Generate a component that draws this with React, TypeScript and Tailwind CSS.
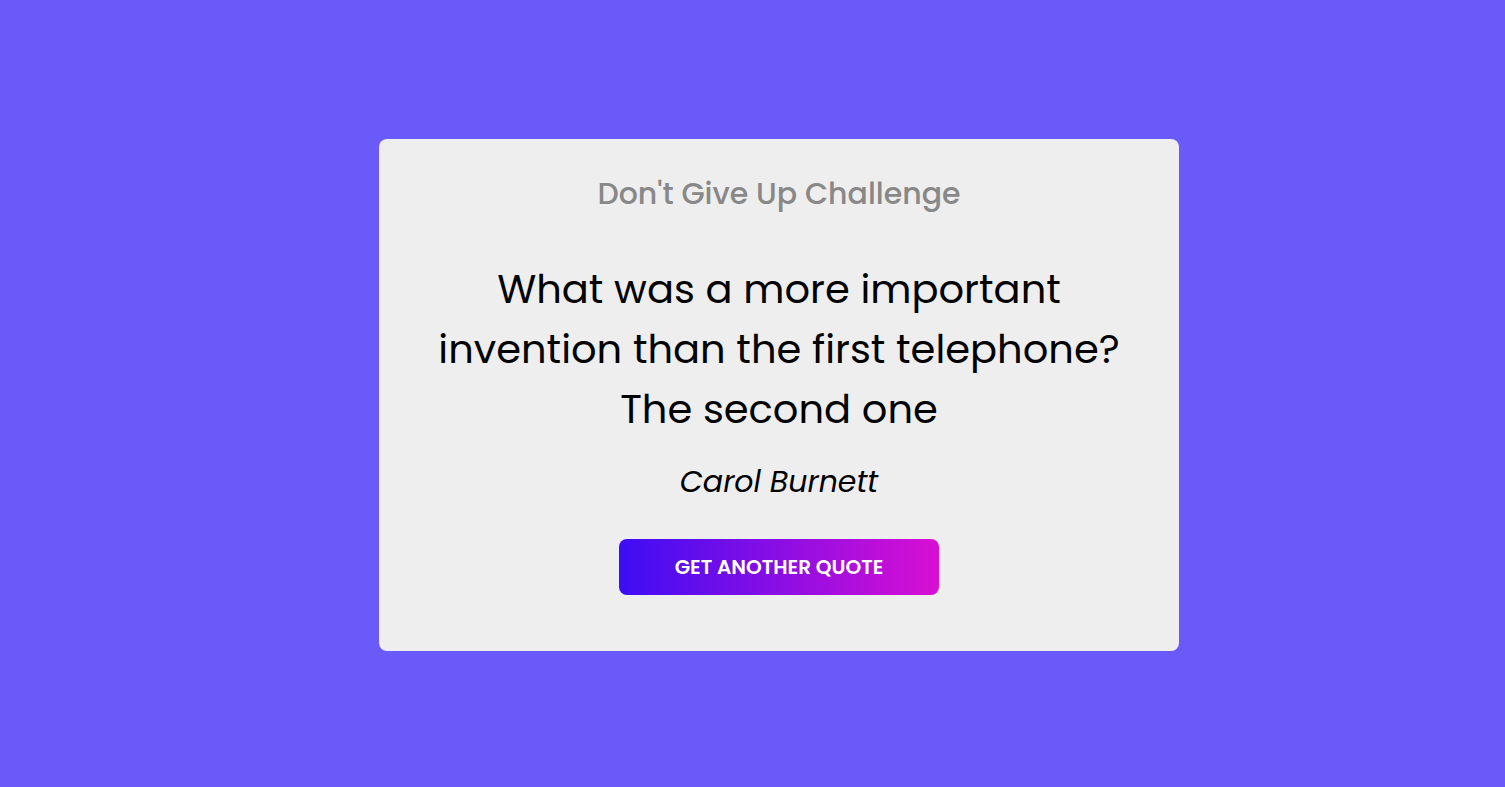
export default function App() {
    return (
        <div className="min-h-screen w-full bg-[#6a5af9] flex items-center justify-center" style={{ fontFamily: "Poppins, Inter, 'Noto Sans', sans-serif" }}>
            <div className="w-[800px] h-[512px] bg-[#eeeeee] rounded-lg flex flex-col items-center pt-[32px] px-[40px] mt-[3px] ml-[53px]">
                <h2 className="text-[30px] leading-[45px] text-[#888888] font-medium">Don't Give Up Challenge</h2>
                <p className="mt-[43px] text-[40px] leading-[60px] text-black text-center">
                    What was a more important
                    <br />
                    invention than the first telephone?
                    <br />
                    The second one
                </p>
                <p className="mt-[20px] text-[30px] leading-[45px] italic text-black">Carol Burnett</p>
                <button className="mt-[35px] w-[320px] h-[56px] rounded-lg bg-[linear-gradient(to_right,#3d0df4,#d90fd3)] text-white font-semibold text-[20px] uppercase">
                    Get another quote
                </button>
            </div>
        </div>
    );
}
